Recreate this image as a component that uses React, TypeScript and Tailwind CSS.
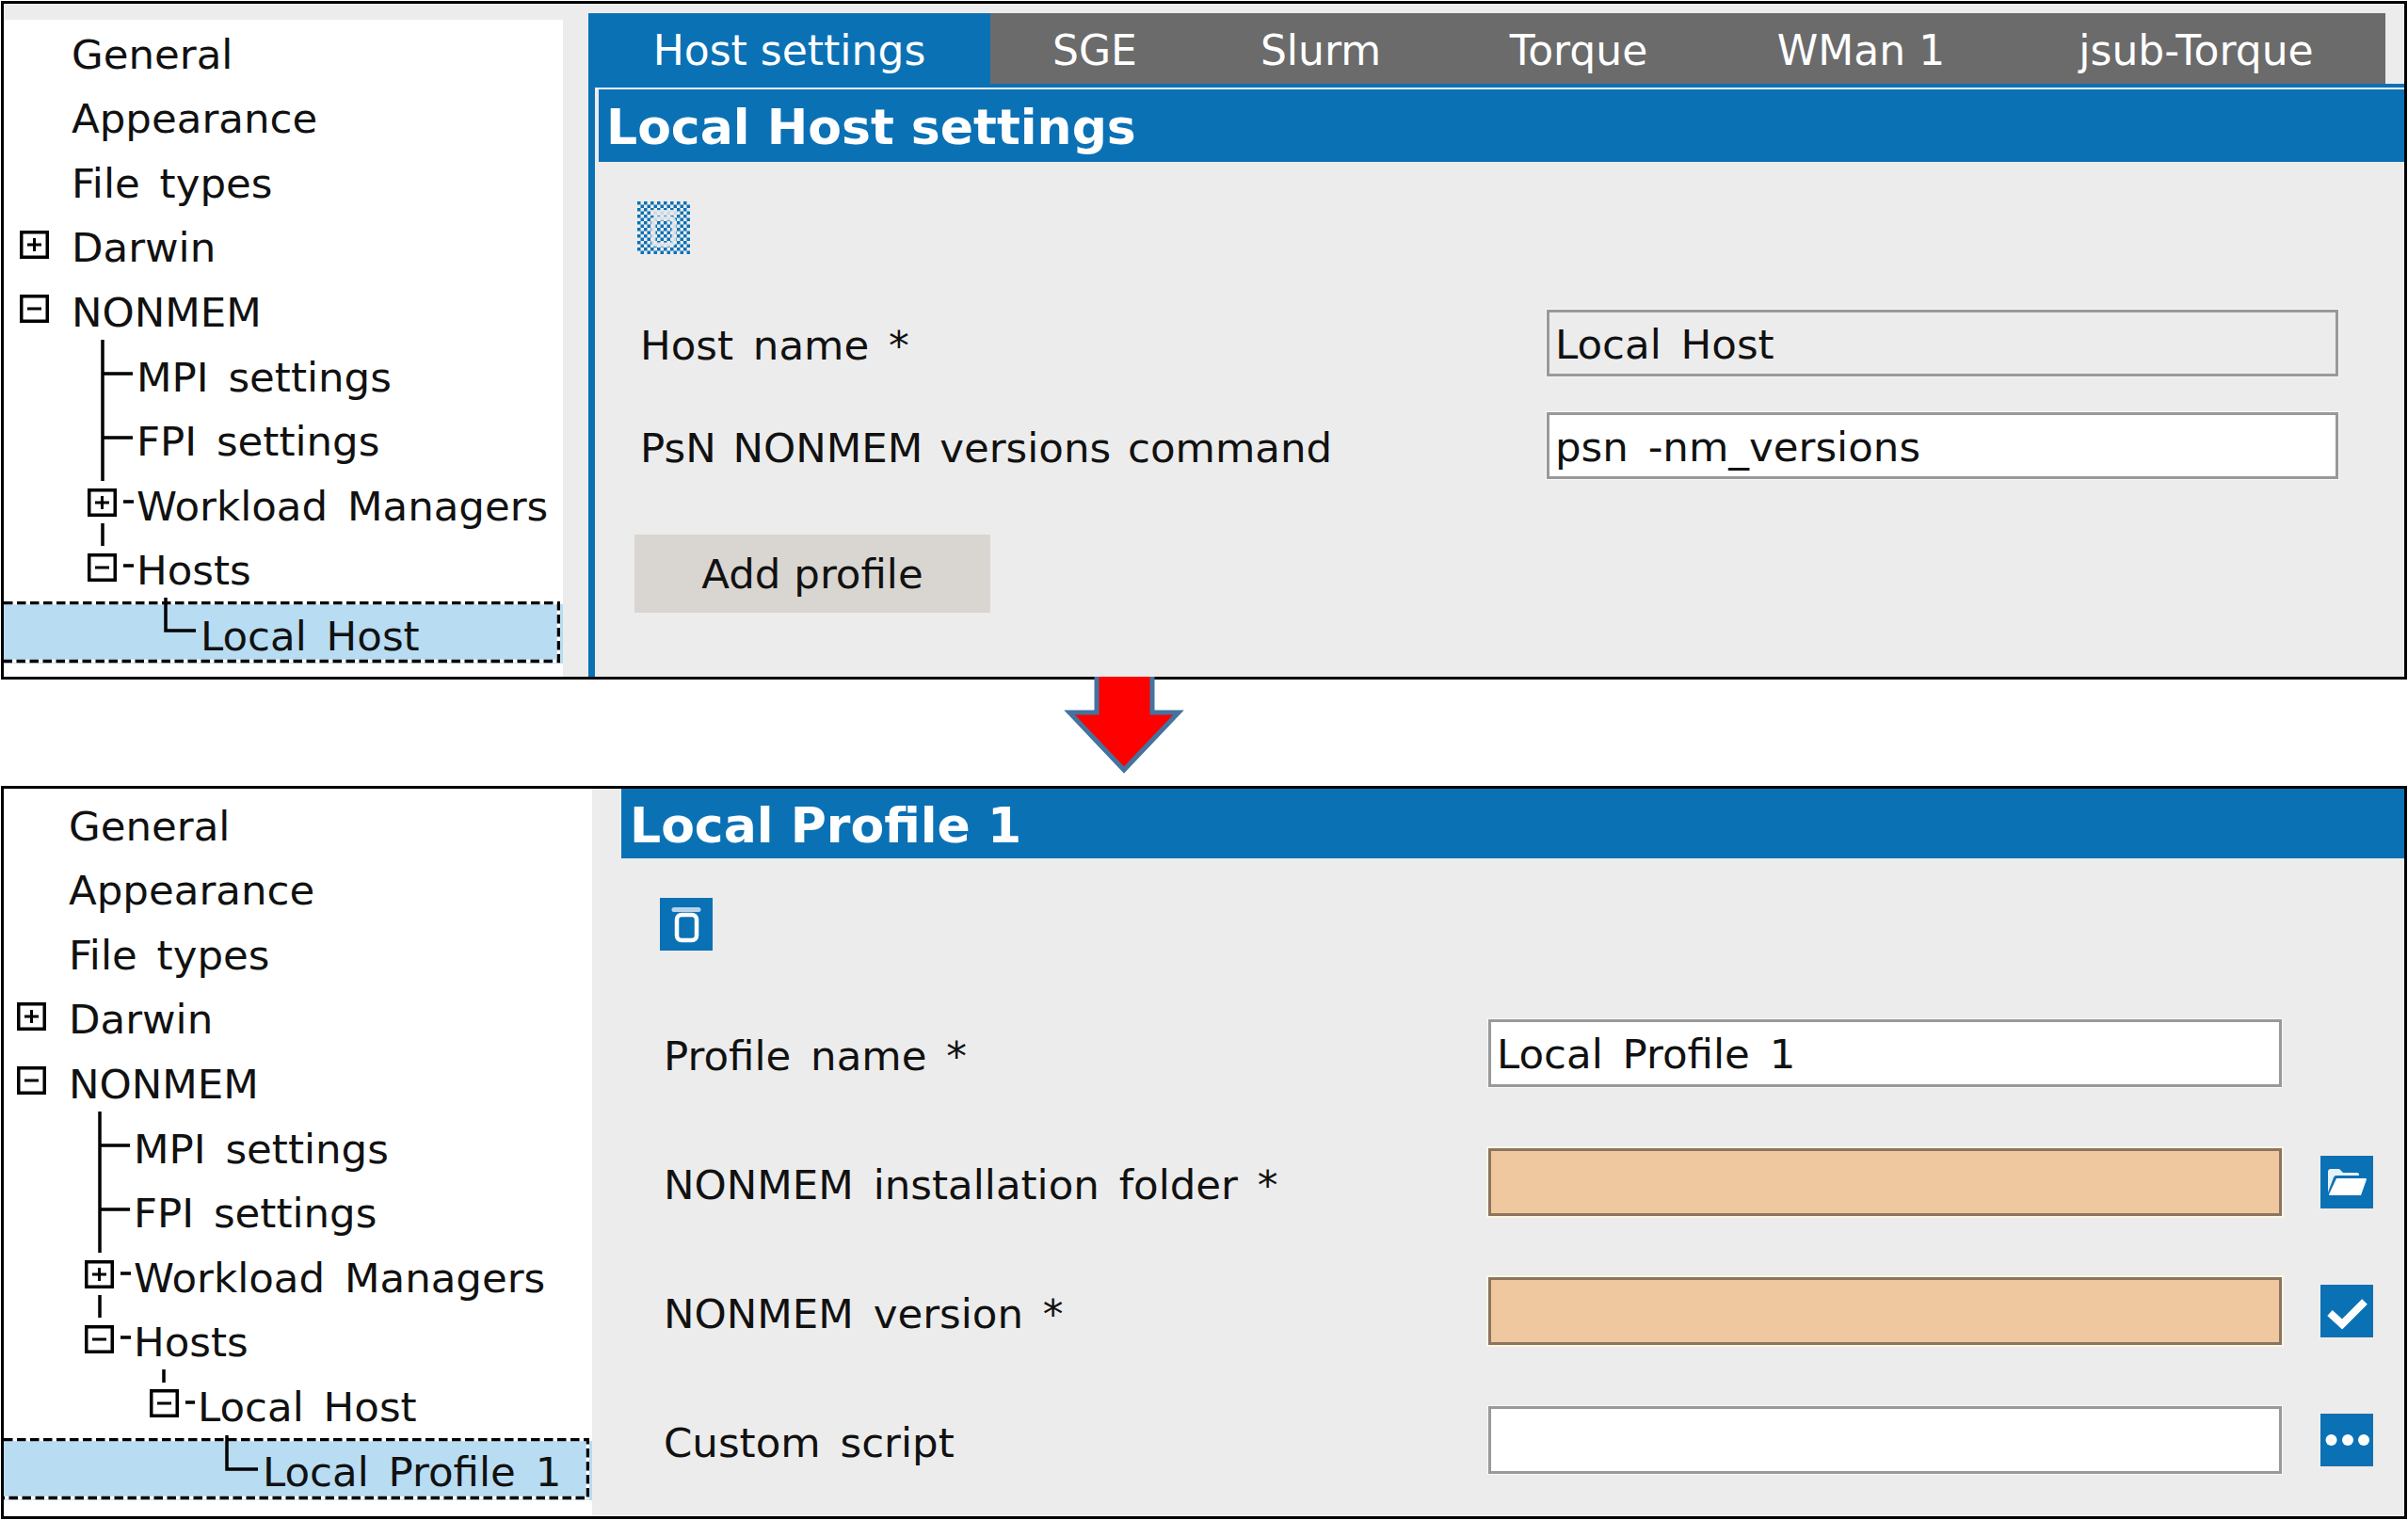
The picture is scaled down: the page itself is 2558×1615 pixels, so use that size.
import { ReactNode } from 'react';

const font = "[font-family:'DejaVu_Sans',sans-serif] [word-spacing:7px]";

interface TreeItem {
  label: string;
  pad: string;
  box?: 'plus' | 'minus';
  gap?: string;
}

const baseItems: TreeItem[] = [
  { label: 'General', pad: 'pl-[72px]' },
  { label: 'Appearance', pad: 'pl-[72px]' },
  { label: 'File types', pad: 'pl-[72px]' },
  { label: 'Darwin', pad: 'pl-[17px]', box: 'plus', gap: 'ml-[24px]' },
  { label: 'NONMEM', pad: 'pl-[17px]', box: 'minus', gap: 'ml-[24px]' },
  { label: 'MPI settings', pad: 'pl-[141px]' },
  { label: 'FPI settings', pad: 'pl-[141px]' },
  { label: 'Workload Managers', pad: 'pl-[89px]', box: 'plus', gap: 'ml-[21px]' },
  { label: 'Hosts', pad: 'pl-[89px]', box: 'minus', gap: 'ml-[21px]' },
];

const ToggleBox = ({ kind }: { kind: 'plus' | 'minus' }) => (
  <svg width="31" height="30" viewBox="0 0 31 30" className="shrink-0 -mt-[5px]">
    <rect x="1.75" y="1.75" width="27.5" height="26.5" fill="white" stroke="black" strokeWidth="3.5" />
    <path d="M8 15H23" stroke="black" strokeWidth="3" />
    {kind === 'plus' && <path d="M15.5 8V22" stroke="black" strokeWidth="3" />}
  </svg>
);

const SharedGuides = () => (
  <path d="M105 338V488M105 374H137M105 442H137M105 533V557M127 510H138M127 578H138" fill="none" stroke="black" strokeWidth="3.5" />
);

const TreeRow = ({ item }: { item: TreeItem }) => (
  <div className={`flex h-[68.6px] items-center whitespace-nowrap ${item.pad}`}>
    {item.box && <ToggleBox kind={item.box} />}
    <span className={`pt-[4px] ${item.gap ?? ''}`}>{item.label}</span>
  </div>
);

const SelectedRow = ({ pad, label, width }: { pad: string; label: string; width: number }) => {
  const outline = `M0 1.5H${width - 1.5}V63.5H0`;
  return (
    <div className={`relative flex h-[66px] items-center whitespace-nowrap ${pad}`}>
      <div className="absolute inset-x-0 top-[3px] bottom-0 bg-[#b8dcf2]" />
      <span className="relative pt-[8px]">{label}</span>
      <svg width={width} height="66" className="absolute top-0 left-0">
        <path d={outline} fill="none" stroke="white" strokeWidth="3.5" />
        <path d={outline} fill="none" stroke="black" strokeWidth="3.5" strokeDasharray="9.5 4.5" />
      </svg>
    </div>
  );
};

const Panel = ({ children, className }: { children: ReactNode; className: string }) => (
  <div className={`mx-[1px] flex border-[3px] border-black bg-[#ececec] ${className}`}>{children}</div>
);

const FieldBox = ({ text, tone, width }: { text?: string; tone: 'white' | 'grey' | 'peach'; width: string }) => {
  const toneClass =
    tone === 'peach'
      ? 'bg-[#efc8a0] border-[#8c7560] shadow-[0_0_0_2px_#fbf6e4]'
      : tone === 'grey'
        ? 'bg-[#ececec] border-[#999999] shadow-[0_0_0_1px_#f8f8f8]'
        : 'bg-white border-[#999999] shadow-[0_0_0_1px_#f8f8f8]';
  return (
    <div className={`flex h-full shrink-0 items-center border-[3px] pt-[4px] pl-[6px] text-[43.5px] text-[#111] ${toneClass} ${width}`}>
      {text}
    </div>
  );
};

const SquareButton = ({ children }: { children: ReactNode }) => (
  <button className="ml-[41px] flex h-[56px] w-[56px] shrink-0 items-center justify-center bg-[#0b71b5] shadow-[0_0_0_1px_#f7ece4]">
    {children}
  </button>
);

const TrashGlyph = () => (
  <svg width="56" height="56" viewBox="0 0 56 56" fill="none">
    <path d="M15 12.5H41" stroke="white" strokeWidth="5" strokeLinecap="round" opacity="0.7" />
    <rect x="18" y="18" width="21" height="27" rx="5" stroke="white" strokeWidth="4.5" />
  </svg>
);

const DisabledTrash = () => (
  <svg width="56" height="56" viewBox="0 0 56 56" className="ml-[3px] block">
    <defs>
      <pattern id="dither" width="7" height="7" patternUnits="userSpaceOnUse">
        <rect width="3.5" height="3.5" fill="#0b71b5" />
        <rect x="3.5" y="3.5" width="3.5" height="3.5" fill="#0b71b5" />
      </pattern>
    </defs>
    <rect width="56" height="56" fill="url(#dither)" />
    <path d="M14 12H42" stroke="#ececec" strokeWidth="6" opacity="0.85" />
    <rect x="17" y="18" width="22" height="28" rx="4" fill="none" stroke="#ececec" strokeWidth="5" opacity="0.85" />
  </svg>
);

const FolderGlyph = () => (
  <svg width="56" height="56" viewBox="0 0 56 56">
    <path d="M8 39V17a3 3 0 0 1 3-3h9l4 4h15a2 2 0 0 1 2 2v1H17a3 3 0 0 0-3 2z" fill="white" opacity="0.9" />
    <path d="M17 24H48a1 1 0 0 1 1 1l-6 17H10a1 1 0 0 1-1-1z" fill="white" />
  </svg>
);

const CheckGlyph = () => (
  <svg width="56" height="56" viewBox="0 0 56 56">
    <path d="M10 30L23 42L47 18" fill="none" stroke="white" strokeWidth="8" strokeLinejoin="miter" />
  </svg>
);

const DotsGlyph = () => (
  <svg width="56" height="56" viewBox="0 0 56 56" fill="white">
    <circle cx="11.5" cy="28" r="6" />
    <circle cx="29" cy="28" r="6" />
    <circle cx="46" cy="28" r="6" />
  </svg>
);

const tabs = [
  { label: 'Host settings', width: 'w-[427px]', active: true },
  { label: 'SGE', width: 'w-[222px]' },
  { label: 'Slurm', width: 'w-[258px]' },
  { label: 'Torque', width: 'w-[290px]' },
  { label: 'WMan 1', width: 'w-[310px]' },
  { label: 'jsub-Torque', width: 'w-[402px]' },
];

const Title = ({ children, className }: { children: ReactNode; className: string }) => (
  <h2 className={`flex items-center bg-[#0b71b5] pt-[3px] text-[52px] leading-none font-bold whitespace-nowrap text-white [word-spacing:0] ${className}`}>
    {children}
  </h2>
);

const HostPanel = () => (
  <Panel className="h-[721px]">
    <aside className="mt-[17px] h-[698px] w-[594px] shrink-0 bg-white pt-[1px] text-[43.5px] text-[#111]">
      <div className="relative">
        <div>
          {baseItems.map((item) => (
            <TreeRow key={item.label} item={item} />
          ))}
        </div>
        <SelectedRow pad="pl-[209px]" label="Local Host" width={591} />
        <svg className="absolute top-px left-0 h-[660px] w-[590px]">
          <SharedGuides />
          <path d="M172 612V647H204" fill="none" stroke="black" strokeWidth="3.5" />
        </svg>
      </div>
    </aside>
    <main className="ml-[27px] flex min-w-0 flex-1 flex-col pt-[10px]">
      <nav className="flex h-[75px] shrink-0 text-[44px] text-white [word-spacing:0]">
        {tabs.map((tab) => (
          <div key={tab.label} className={`flex items-center justify-center pt-[4px] ${tab.width} ${tab.active ? 'bg-[#0b71b5]' : 'bg-[#6b6b6b]'}`}>
            {tab.label}
          </div>
        ))}
      </nav>
      <section className="flex-1 border-t-[4px] border-l-[7px] border-[#0b71b5]">
        <div className="h-[2px] bg-[#f4f8fb]" />
        <div className="pl-[4px]">
          <Title className="h-[77px] pl-[8px]">Local Host settings</Title>
        </div>
        <div className="pt-[42px] pl-[42px]">
          <DisabledTrash />
          <div className="mt-[59px] flex h-[71px] items-center">
            <span className="w-[969px] pt-[6px] pl-[6px] text-[43.5px] text-[#111]">Host name *</span>
            <FieldBox text="Local Host" tone="grey" width="w-[841px]" />
          </div>
          <div className="mt-[38px] flex h-[71px] items-center">
            <span className="w-[969px] pt-[6px] pl-[6px] text-[43.5px] whitespace-nowrap text-[#111] [word-spacing:4px]">PsN NONMEM versions command</span>
            <FieldBox text="psn -nm_versions" tone="white" width="w-[841px]" />
          </div>
          <button className="mt-[59px] h-[83px] w-[378px] bg-[#d9d6d1] pt-[3px] text-[43.5px] text-[#111]">Add profile</button>
        </div>
      </section>
    </main>
  </Panel>
);

const ProfileRow = ({ label, tone, value, action }: { label: string; tone: 'white' | 'peach'; value?: string; action?: ReactNode }) => (
  <div className="flex h-[72px] items-center">
    <span className="w-[876px] pt-[7px] text-[43.5px] whitespace-nowrap text-[#111]">{label}</span>
    <FieldBox tone={tone} width="w-[843px]" text={value} />
    {action}
  </div>
);

const ProfilePanel = () => (
  <Panel className="mt-[113px] h-[779px]">
    <aside className="h-full w-[625px] shrink-0 bg-white pt-[4px] text-[43.5px] text-[#111]">
      <div className="relative">
        <div className="-ml-[3px]">
          {baseItems.map((item) => (
            <TreeRow key={item.label} item={item} />
          ))}
          <div className="flex h-[68.6px] items-center whitespace-nowrap pl-[158px]">
            <ToggleBox kind="minus" />
            <span className="ml-[20px] pt-[4px]">Local Host</span>
          </div>
        </div>
        <SelectedRow pad="pl-[275px]" label="Local Profile 1" width={622} />
        <svg className="absolute top-px -left-[3px] h-[730px] w-[620px]">
          <SharedGuides />
          <path d="M173 612V626M196 647H206M240 682V718H273" fill="none" stroke="black" strokeWidth="3.5" />
        </svg>
      </div>
    </aside>
    <main className="ml-[31px] min-w-0 flex-1">
      <Title className="h-[74px] pl-[9px]">Local Profile 1</Title>
      <div className="pt-[42px] pl-[41px]">
        <div className="flex h-[56px] w-[56px] items-center justify-center bg-[#0b71b5]">
          <TrashGlyph />
        </div>
        <div className="mt-[73px] flex flex-col gap-[65px] pl-[4px]">
          <ProfileRow label="Profile name *" tone="white" value="Local Profile 1" />
          <ProfileRow label="NONMEM installation folder *" tone="peach" action={<SquareButton><FolderGlyph /></SquareButton>} />
          <ProfileRow label="NONMEM version *" tone="peach" action={<SquareButton><CheckGlyph /></SquareButton>} />
          <ProfileRow label="Custom script" tone="white" action={<SquareButton><DotsGlyph /></SquareButton>} />
        </div>
      </div>
    </main>
  </Panel>
);

const DownArrow = () => (
  <svg width="140" height="108" viewBox="0 0 140 108" className="absolute top-[719px] left-[1125px]">
    <path d="M40 -5V38H11L69 99L127 38H99V-5Z" fill="#ff0000" stroke="#44739f" strokeWidth="5" />
  </svg>
);

export default function App() {
  return (
    <div className={`relative h-[1615px] w-[2558px] overflow-hidden bg-white pt-[1px] ${font}`}>
      <HostPanel />
      <ProfilePanel />
      <DownArrow />
    </div>
  );
}
